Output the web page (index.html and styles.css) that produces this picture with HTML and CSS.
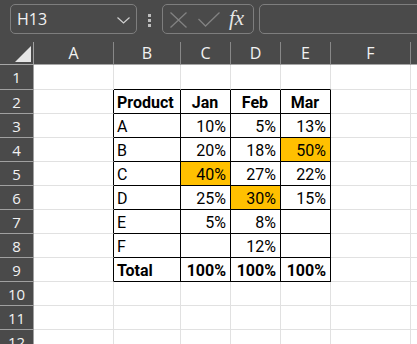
FILE: index.html
```html
<!DOCTYPE html>
<html>
<head>
<meta charset="utf-8">
<link rel="stylesheet" href="styles.css">
</head>
<body>
<div class="toolbar">
  <div class="namebox"><span>H13</span>
    <svg class="chev" width="13" height="7" viewBox="0 0 13 7"><polyline points="0.5,0.5 6.5,6 12.5,0.5" fill="none" stroke="#d0d0d0" stroke-width="1.2"/></svg>
  </div>
  <div class="dots"><i class="dot"></i><i class="dot"></i><i class="dot"></i></div>
  <div class="fxbox">
    <svg class="xicon" width="17" height="16" viewBox="0 0 17 16"><path d="M0.5 0.5 L16.5 15.5 M16.5 0.5 L0.5 15.5" stroke="#828282" stroke-width="1.3" fill="none"/></svg>
    <svg class="check" width="22" height="15" viewBox="0 0 22 15"><polyline points="0.5,7 7.5,14 21.5,0.5" fill="none" stroke="#828282" stroke-width="1.3"/></svg>
    <span class="fx">fx</span>
  </div>
  <div class="formula"></div>
</div>
<div class="sheet">
  <div class="corner"><svg width="33" height="22" viewBox="0 0 33 22"><polygon points="15,20 31,20 31,4" fill="#e6e6e6"/></svg></div>
  <div class="ch">A</div><div class="ch">B</div><div class="ch">C</div><div class="ch">D</div><div class="ch">E</div><div class="ch">F</div><div class="ch"></div>

  <div class="rh">1</div><div class="c"></div><div class="c tt"></div><div class="c tt"></div><div class="c tt"></div><div class="c tt"></div><div class="c"></div><div class="c"></div>

  <div class="rh">2</div><div class="c tl"></div><div class="c t b">Product</div><div class="c t b ctr">Jan</div><div class="c t b ctr">Feb</div><div class="c t b ctr">Mar</div><div class="c"></div><div class="c"></div>

  <div class="rh">3</div><div class="c tl"></div><div class="c t">A</div><div class="c t num">10%</div><div class="c t num">5%</div><div class="c t num">13%</div><div class="c"></div><div class="c"></div>

  <div class="rh">4</div><div class="c tl"></div><div class="c t">B</div><div class="c t num">20%</div><div class="c t num">18%</div><div class="c t num hl">50%</div><div class="c"></div><div class="c"></div>

  <div class="rh">5</div><div class="c tl"></div><div class="c t">C</div><div class="c t num hl">40%</div><div class="c t num">27%</div><div class="c t num">22%</div><div class="c"></div><div class="c"></div>

  <div class="rh">6</div><div class="c tl"></div><div class="c t">D</div><div class="c t num">25%</div><div class="c t num hl">30%</div><div class="c t num">15%</div><div class="c"></div><div class="c"></div>

  <div class="rh">7</div><div class="c tl"></div><div class="c t">E</div><div class="c t num">5%</div><div class="c t num">8%</div><div class="c t num"></div><div class="c"></div><div class="c"></div>

  <div class="rh">8</div><div class="c tl"></div><div class="c t">F</div><div class="c t num"></div><div class="c t num">12%</div><div class="c t num"></div><div class="c"></div><div class="c"></div>

  <div class="rh">9</div><div class="c tl"></div><div class="c t b">Total</div><div class="c t b num">100%</div><div class="c t b num">100%</div><div class="c t b num">100%</div><div class="c"></div><div class="c"></div>

  <div class="rh">10</div><div class="c"></div><div class="c"></div><div class="c"></div><div class="c"></div><div class="c"></div><div class="c"></div><div class="c"></div>

  <div class="rh">11</div><div class="c"></div><div class="c"></div><div class="c"></div><div class="c"></div><div class="c"></div><div class="c"></div><div class="c"></div>

  <div class="rh">12</div><div class="c"></div><div class="c"></div><div class="c"></div><div class="c"></div><div class="c"></div><div class="c"></div><div class="c"></div>
</div>
</body>
</html>
```
FILE: styles.css
```css
html, body {
  margin: 0;
  padding: 0;
  background: #ffffff;
  overflow: hidden;
  font-family: Roboto, "Liberation Sans", sans-serif;
}

.toolbar {
  height: 42px;
  box-sizing: border-box;
  padding: 4px 0 0 10px;
  background: #4a4a4a;
  display: flex;
  align-items: flex-start;
  overflow: hidden;
}

.namebox {
  width: 127px;
  height: 30px;
  flex-shrink: 0;
  box-sizing: border-box;
  border: 1px solid #7e7e7e;
  border-radius: 5px;
  display: flex;
  align-items: center;
  justify-content: space-between;
  padding: 0 6px 0 6px;
  color: #f2f2f2;
  font-family: "Open Sans", sans-serif;
  font-size: 16px;
}

.chev {
  display: block;
  margin-top: 2px;
}

.dots {
  margin: 10px 11px 0 11px;
  width: 3px;
  display: flex;
  flex-direction: column;
  gap: 2px;
  flex-shrink: 0;
}

.dot {
  display: block;
  width: 3px;
  height: 3px;
  background: #bdbdbd;
}

.fxbox {
  width: 92px;
  height: 30px;
  flex-shrink: 0;
  box-sizing: border-box;
  border: 1px solid #7e7e7e;
  border-radius: 5px;
  display: flex;
  align-items: center;
  padding-left: 7px;
}

.xicon {
  display: block;
  margin-top: 1px;
}

.check {
  display: block;
  margin-left: 11px;
  margin-top: 1px;
}

.fx {
  margin-left: 9px;
  font-family: "Liberation Serif", serif;
  font-style: italic;
  font-size: 21px;
  color: #e6e6e6;
  line-height: 20px;
  margin-top: -2px;
}

.formula {
  margin-left: 5px;
  width: 300px;
  height: 30px;
  flex-shrink: 0;
  box-sizing: border-box;
  border: 1px solid #7e7e7e;
  border-radius: 5px;
}

.sheet {
  display: grid;
  grid-template-columns: 34px 80px 67px 50px 50px 50px 80px 1fr;
  grid-template-rows: 23px 25px repeat(11, 24px);
}

.sheet > div {
  box-sizing: border-box;
}

.corner {
  background: #4a4a4a;
  border-right: 1px solid #a0a0a0;
  border-bottom: 1px solid #a6a6a6;
}

.corner svg {
  display: block;
}

.ch {
  background: #4a4a4a;
  border-right: 1px solid #888888;
  border-bottom: 1px solid #a6a6a6;
  color: #f2f2f2;
  font-family: "Open Sans", sans-serif;
  font-size: 16px;
  line-height: 22px;
  text-align: center;
}

.rh {
  background: #4a4a4a;
  border-right: 1px solid #a0a0a0;
  border-bottom: 1px solid #a0a0a0;
  color: #f2f2f2;
  font-family: "Open Sans", sans-serif;
  font-size: 15px;
  display: flex;
  align-items: center;
  justify-content: center;
}

.c {
  border-right: 1px solid #e1e1e1;
  border-bottom: 1px solid #e1e1e1;
  display: flex;
  align-items: flex-end;
  line-height: 20px;
  font-size: 16px;
  color: #000000;
  padding: 0 4px 0 3px;
  overflow: hidden;
  white-space: nowrap;
}

.tt {
  border-bottom-color: #000000;
}

.tl {
  border-right-color: #000000;
}

.t {
  border-right-color: #000000;
  border-bottom-color: #000000;
}

.b {
  font-weight: bold;
}

.num {
  justify-content: flex-end;
}

.ctr {
  justify-content: center;
}

.hl {
  background: #ffc000;
}
```
